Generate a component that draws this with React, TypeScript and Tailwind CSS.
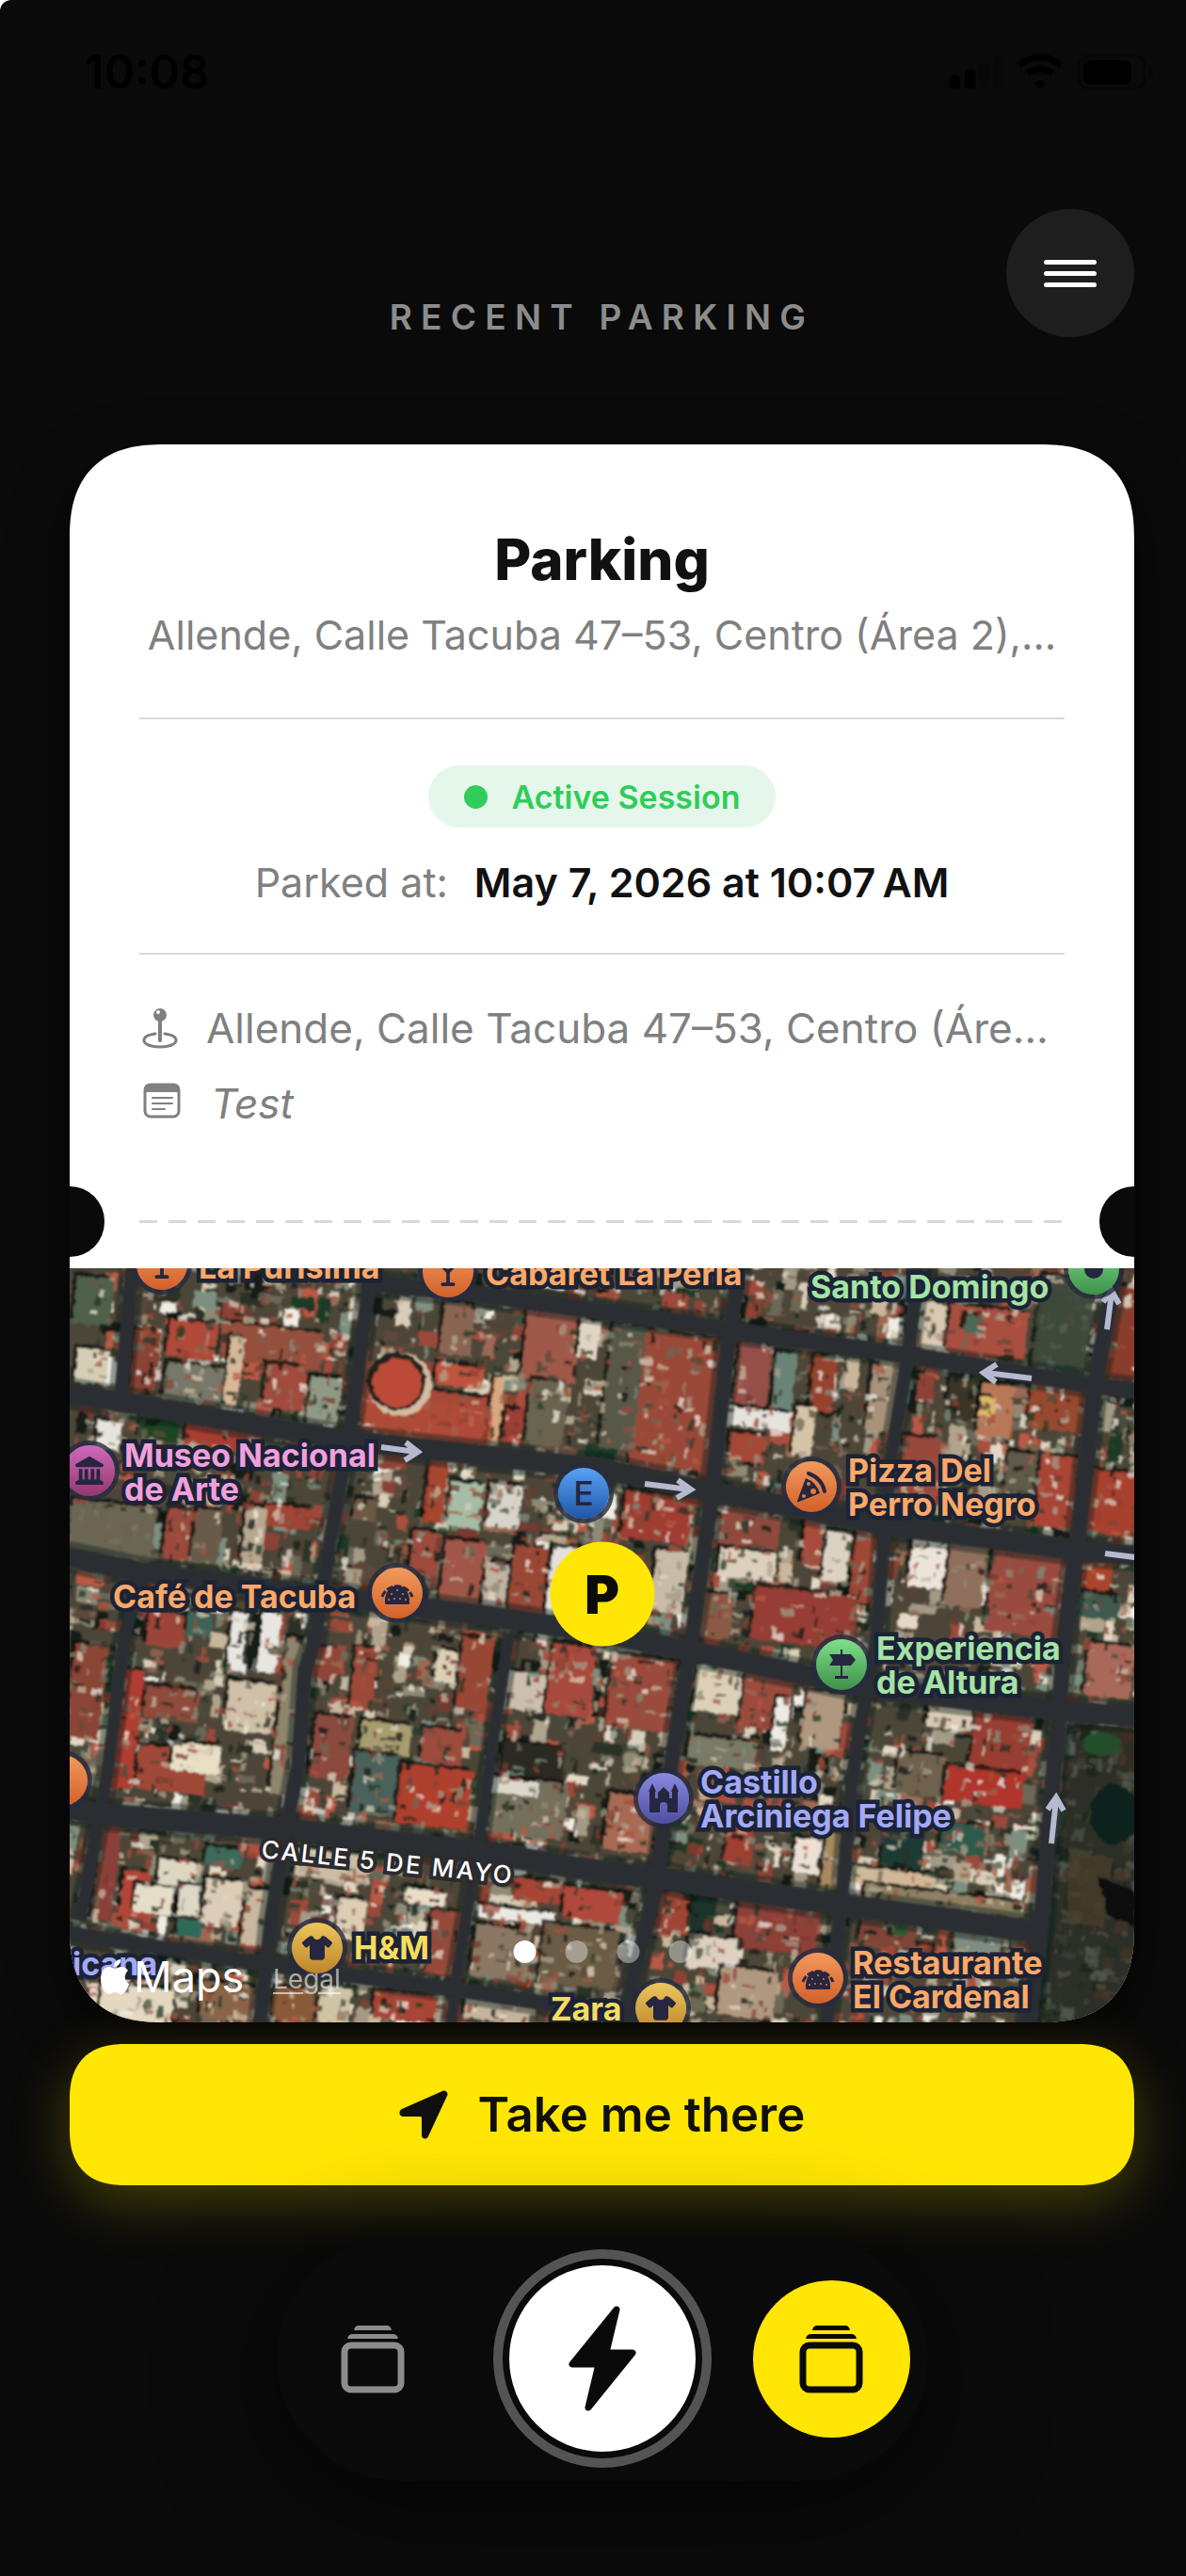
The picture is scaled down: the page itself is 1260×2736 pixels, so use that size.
import React from 'react';
import { FaLandmark, FaMartiniGlassEmpty, FaShirt } from 'react-icons/fa6';

type Tone = 'orange' | 'green' | 'pink' | 'indigo' | 'gold' | 'blue';

interface Place {
  name?: string[];
  tone: Tone;
  icon?: React.ReactNode;
  pin?: { x: number; y: number };
  label?: { x: number; y: number };
}

const TEXT_TONES: Record<Tone, string> = {
  orange: 'text-[#fba868]',
  green: 'text-[#a4e3a4]',
  pink: 'text-[#f0a0dd]',
  indigo: 'text-[#a3a9f5]',
  gold: 'text-[#f5dc60]',
  blue: 'text-[#4a90e8]',
};

const PIN_TONES: Record<Tone, string> = {
  orange: 'from-[#f29a5c] to-[#d2602a]',
  green: 'from-[#7fe08c] to-[#3d9148]',
  pink: 'from-[#d069bd] to-[#94396f]',
  indigo: 'from-[#8a8be0] to-[#4e4ea0]',
  gold: 'from-[#ecc65c] to-[#bd852a]',
  blue: 'from-[#5aa2f5] to-[#1f56a8]',
};

// Building footprints: x, y, width, height, roof colour
type Roof = [number, number, number, number, string];

const ROOFS: Roof[] = [
  [105, 57, 51, 39, '#b04a38'], [66, 66, 28, 67, '#8a4234'], [160, 63, 109, 40, '#95503c'],
  [167, 73, 15, 73, '#d8b898'], [101, 103, 62, 40, '#77786a'], [207, 103, 43, 47, '#a04c3c'],
  [254, 116, 33, 50, '#8f9a85'], [7, 86, 33, 37, '#d5cdb5'], [5, 10, 40, 50, '#50604c'],
  [309, 130, 141, 50, '#a84a38'], [389, 103, 51, 23, '#c0523c'], [396, 36, 33, 57, '#8a6552'],
  [483, 46, 58, 74, '#a0584a'], [487, 120, 40, 70, '#6a6450'], [541, 56, 22, 40, '#e0d5c5'],
  [447, 116, 12, 74, '#d9a880'], [461, 150, 20, 36, '#a03c34'], [29, 163, 25, 30, '#e8e4dc'],
  [74, 160, 42, 23, '#1f4424'], [123, 168, 80, 24, '#a83c30'], [403, 228, 35, 48, '#a5bda6'],
  [445, 230, 35, 46, '#d8d4cc'], [0, 250, 90, 58, '#6b6654'], [101, 256, 29, 54, '#9a4a3c'],
  [132, 256, 28, 57, '#6a5a48'], [207, 253, 51, 23, '#a04434'], [185, 253, 22, 60, '#b8a890'],
  [363, 280, 29, 46, '#9c4c3c'], [396, 290, 44, 70, '#a0564a'], [440, 313, 29, 50, '#c0b4a4'],
  [469, 296, 36, 74, '#9a4636'], [509, 296, 26, 74, '#e4e0da'], [83, 366, 40, 37, '#9a4438'],
  [125, 366, 27, 24, '#3c6458'], [170, 366, 20, 64, '#e8e6e0'], [202, 366, 20, 64, '#e8e6e0'],
  [190, 366, 12, 60, '#161a18'], [380, 190, 20, 80, '#a8442f'], [302, 245, 24, 24, '#6a5a44'],
  [602, 70, 88, 150, '#9a4a38'], [570, 60, 36, 133, '#59584a'], [708, 80, 36, 66, '#94504a'],
  [748, 90, 22, 63, '#6a8478'], [788, 93, 25, 60, '#96422e'], [697, 150, 69, 20, '#e6e2dc'],
  [700, 176, 40, 30, '#a44a38'], [770, 146, 21, 54, '#d6c4a8'], [850, 96, 32, 77, '#a8927a'],
  [900, 36, 30, 50, '#d8c8b0'], [933, 43, 84, 50, '#a85040'], [951, 50, 18, 20, '#4d6a58'],
  [1028, 10, 58, 106, '#3f4a3c'], [1104, 20, 34, 100, '#8a3c2c'], [933, 116, 29, 44, '#3a3426'],
  [966, 123, 36, 57, '#b87858'], [967, 137, 16, 20, '#dcb868'], [1020, 123, 62, 50, '#96482f'],
  [882, 180, 44, 60, '#98483a'], [995, 196, 33, 40, '#5f5a48'], [1028, 200, 47, 76, '#a84436'],
  [1082, 216, 50, 67, '#a8402f'], [588, 240, 72, 50, '#a03c30'], [686, 250, 69, 46, '#8e4c3e'],
  [780, 260, 20, 56, '#a84c3c'], [802, 280, 26, 53, '#dcd2c4'], [832, 275, 22, 80, '#a04636'],
  [893, 283, 37, 57, '#ece4da'], [933, 286, 40, 74, '#90705c'], [977, 300, 80, 90, '#9a4c40'],
  [1075, 306, 33, 37, '#a8442c'], [1072, 346, 44, 27, '#3f5a50'], [668, 346, 36, 47, '#8a5a44'],
  [726, 343, 109, 57, '#963e34'], [690, 300, 60, 30, '#dcd0bc'], [620, 300, 34, 66, '#c8bca8'],
  [47, 426, 26, 127, '#b03c30'], [80, 446, 58, 34, '#8f4c3a'], [167, 440, 51, 53, '#cfc0a8'],
  [72, 510, 73, 46, '#a04838'], [109, 505, 51, 31, '#e8dfc4'], [0, 400, 36, 100, '#8a4434'],
  [222, 393, 22, 167, '#8f846c'], [258, 403, 28, 34, '#904438'], [301, 403, 24, 67, '#9c4a38'],
  [389, 406, 23, 34, '#ddd0b4'], [414, 393, 33, 77, '#984636'], [309, 483, 54, 33, '#a89c70'],
  [301, 516, 48, 64, '#4c625c'], [349, 530, 76, 63, '#b0402e'], [374, 490, 44, 36, '#9c4c3e'],
  [258, 476, 40, 67, '#8c4a3e'], [458, 506, 67, 34, '#2a2c22'], [509, 400, 47, 76, '#a84a3e'],
  [462, 430, 42, 40, '#cbbfae'], [447, 543, 80, 60, '#74705c'], [448, 543, 50, 16, '#dcd8cc'],
  [29, 590, 21, 103, '#8a4038'], [55, 640, 29, 50, '#b04438'], [69, 656, 40, 30, '#e4dec8'],
  [94, 630, 44, 26, '#ddd6c0'], [145, 616, 38, 20, '#3c6a5c'], [115, 655, 24, 44, '#ded8c6'],
  [142, 650, 40, 48, '#dccdb8'], [185, 660, 28, 60, '#c8b8a0'], [114, 692, 26, 18, '#2f6a5a'],
  [240, 620, 80, 30, '#cbbca4'], [356, 660, 44, 16, '#eadcc8'], [381, 683, 33, 70, '#94483a'],
  [284, 670, 30, 44, '#dccdb4'], [425, 680, 91, 14, '#ece8e2'], [472, 650, 50, 24, '#a84434'],
  [525, 660, 60, 33, '#b0483a'], [501, 700, 80, 62, '#6a5c44'], [428, 700, 60, 55, '#8a7864'],
  [32, 763, 77, 37, '#e4d8c0'], [140, 760, 60, 40, '#8a6448'], [215, 765, 44, 35, '#8a5a38'],
  [265, 763, 33, 40, '#cfc4a4'], [323, 770, 66, 30, '#a84434'], [420, 770, 60, 30, '#c4b49c'],
  [573, 413, 69, 77, '#9a4c3c'], [664, 423, 51, 50, '#ddd0b8'], [715, 430, 51, 60, '#9c4c3e'],
  [657, 500, 73, 30, '#7a7a66'], [748, 456, 14, 57, '#ecece6'], [780, 450, 40, 60, '#b09880'],
  [911, 460, 55, 30, '#dccbb4'], [959, 473, 61, 67, '#983e32'], [879, 516, 51, 44, '#6e6250'],
  [930, 533, 83, 37, '#b0342c'], [926, 590, 47, 33, '#2f5a4c'], [864, 593, 44, 47, '#1e3a34'],
  [830, 640, 90, 18, '#d0b898'], [845, 664, 170, 16, '#8e8062'], [697, 596, 29, 37, '#9c4030'],
  [770, 606, 29, 37, '#ece0d4'], [801, 600, 22, 60, '#a88860'], [570, 560, 50, 60, '#a86a54'],
  [624, 663, 33, 40, '#a04434'], [660, 666, 26, 40, '#1c302c'], [708, 673, 87, 53, '#8c3f38'],
  [657, 710, 54, 36, '#ddd0c0'], [840, 690, 60, 30, '#7c4438'], [870, 692, 20, 16, '#2c5a30'],
  [940, 700, 50, 30, '#7f8c80'], [690, 745, 60, 50, '#b09880'], [1080, 400, 50, 56, '#a8685a'],
];

const ROADS = [
  // west to east
  { d: 'M310 15 L425 26 L566 46 L704 66 L893 93 L1093 125 L1140 131', w: 18 },
  { d: 'M-6 132 L61 143 L294 183 L566 213 L675 236 L868 273 L1075 300 L1140 306', w: 22 },
  { d: 'M-6 306 L76 323 L287 350 L450 370 L566 388 L657 406 L849 446 L1053 470 L1140 477', w: 22 },
  { d: 'M-6 572 L32 580 L229 596 L432 620 L566 641 L628 648 L820 676 L1035 706', w: 24 },
  { d: 'M-6 706 L214 740 L410 766 L566 790 L640 803', w: 16 },
  // north to south
  { d: 'M67 -5 L54 140', w: 14 },
  { d: 'M76 326 L58 393 L40 536 L32 580 L11 693', w: 13 },
  { d: 'M321 -5 L298 173 L276 293 L261 393 L250 426 L243 526 L229 600 L214 693 L202 805', w: 15 },
  { d: 'M467 388 L450 500 L436 600 L410 760 L405 805', w: 12 },
  { d: 'M712 -5 L700 76 L682 240 L661 393 L639 526 L624 653 L606 726 L586 805', w: 16 },
  { d: 'M903 -5 L889 103 L871 210 L857 393 L846 450 L831 543 L820 676 L804 805', w: 14 },
  { d: 'M1112 -5 L1089 126 L1071 286 L1057 393 L1049 493 L1038 626 L1031 706 L1018 805', w: 17 },
];

const ARROWS = [
  'M331 190 L368 195 M357 185 L370 195 L356 204',
  'M611 229 L658 235 M646 225 L660 235 L645 244',
  'M1022 117 L973 111 M985 102 L971 111 L984 121',
  'M1102 65 L1107 26 M1098 36 L1107 24 L1115 38',
  'M1100 303 L1140 308',
  'M1043 611 L1048 564 M1039 575 L1048 562 L1056 576',
];

const DETAIL_COLOURS = [
  '#a8503e', '#8c4234', '#b85a44', '#743a2e', '#9a6a54', '#e4d8c4', '#c9b79c', '#f0ece2',
  '#2a3026', '#161c18', '#4a4c3c', '#6c6856', '#8f8a74', '#1f3a26', '#5c4a3a', '#7d8f80',
  '#b0a48c', '#141a16', '#d8cdb8', '#a39a86', '#9c4a3a',
];

function seeded(seed: number) {
  let s = seed;
  return () => {
    s = (s * 1664525 + 1013904223) % 4294967296;
    return s / 4294967296;
  };
}

function makeDetails(count: number, seed: number, min: number, max: number) {
  const rand = seeded(seed);
  return Array.from({ length: count }, () => {
    const x = rand() * 1200 - 20;
    const y = rand() * 1000 - 150;
    const tall = rand() > 0.5;
    const a = min + rand() * (max - min);
    const b = min + rand() * (max - min) * 0.4;
    const fill = DETAIL_COLOURS[Math.floor(rand() * DETAIL_COLOURS.length)];
    return { x, y, w: tall ? b : a, h: tall ? a : b, fill };
  });
}

const BASE_DETAILS = makeDetails(2600, 11, 8, 34);
const FINE_DETAILS = makeDetails(7500, 77, 2, 14);

function SatelliteImage() {
  return (
    <svg viewBox="0 0 1131 801" preserveAspectRatio="xMidYMid slice" className="block h-full w-full" aria-hidden="true">
      <defs>
        <filter id="rough" x="0" y="0" width="100%" height="100%">
          <feTurbulence type="fractalNoise" baseFrequency="0.12" numOctaves="2" seed="4" result="noise" />
          <feDisplacementMap in="SourceGraphic" in2="noise" scale="6" xChannelSelector="R" yChannelSelector="G" />
          <feGaussianBlur stdDeviation="0.9" />
        </filter>
        <filter id="soften" x="0" y="0" width="100%" height="100%">
          <feGaussianBlur stdDeviation="1" />
        </filter>
      </defs>
      <rect width="1131" height="801" fill="#4c4638" />
      <g filter="url(#rough)">
        <g transform="rotate(7 565 400)">
          {BASE_DETAILS.map((r, i) => (
            <rect key={i} x={r.x} y={r.y} width={r.w} height={r.h} fill={r.fill} />
          ))}
        </g>
        {ROOFS.map(([x, y, w, h, fill], i) => (
          <g key={i} transform={`rotate(7 ${x + w / 2} ${y + h / 2})`}>
            <rect x={x - 4} y={y - 4} width={w} height={h} fill="#0e120c" opacity="0.8" />
            <rect x={x} y={y} width={w} height={h} fill={fill} />
          </g>
        ))}
        <g transform="rotate(7 565 400)" opacity="0.75">
          {FINE_DETAILS.map((r, i) => (
            <rect key={i} x={r.x} y={r.y} width={r.w} height={r.h} fill={r.fill} />
          ))}
        </g>
        <path d="M308 90 L301 150 L330 178 L400 188 L446 190 L450 150 L380 140 Z" fill="#b04c38" opacity="0.7" />
        <circle cx="351" cy="123" r="34" fill="#d6bca2" />
        <circle cx="347" cy="120" r="31" fill="#20201a" />
        <circle cx="348" cy="122" r="26" fill="#bb4c38" />
        <path d="M1030 20 L1088 30 L1078 114 L1022 104 Z" fill="#3c473a" opacity="0.8" />
        <path d="M0 252 L92 262 L84 310 L0 298 Z" fill="#6b6654" opacity="0.85" />
        <path d="M1060 484 L1140 490 V805 H1025 L1036 706 Z" fill="#1f2a21" opacity="0.75" />
        <ellipse cx="1096" cy="505" rx="20" ry="12" fill="#24502a" />
        <ellipse cx="1110" cy="580" rx="26" ry="32" fill="#10241a" />
        <path d="M1062 620 L1108 626 L1098 700 L1060 694 Z" fill="#4a3d2a" opacity="0.8" />
        <path d="M1092 645 L1131 662 V700 L1104 688 Z" fill="#090b0a" />
      </g>
      <g filter="url(#soften)">
        {ROADS.map((road) => (
          <path key={road.d} d={road.d} fill="none" stroke="#101c12" strokeWidth={road.w + 12} strokeOpacity="0.4" />
        ))}
        {ROADS.map((road) => (
          <path key={road.d} d={road.d} fill="none" stroke="#2a2d30" strokeWidth={road.w} strokeLinejoin="round" />
        ))}
      </g>
      {ARROWS.map((d) => (
        <path key={d} d={d} fill="none" stroke="#b5bad0" strokeWidth="6" />
      ))}
    </svg>
  );
}

function TacoIcon() {
  return (
    <svg viewBox="0 0 36 26" className="h-[26px] w-[36px]" aria-hidden="true">
      <path d="M5 24 C4 12 11 5 18 5 C25 5 32 12 31 24 Q31 25 30 25 H6 Q5 25 5 24 Z" fill="currentColor" />
      <path d="M2 17 A17 17 0 0 1 34 17" fill="none" stroke="currentColor" strokeWidth="3" strokeDasharray="7 2" />
      <g fill="#e07a3c">
        <circle cx="12" cy="14" r="1" /><circle cx="18" cy="10" r="1" /><circle cx="24" cy="14" r="1" />
        <circle cx="9" cy="20" r="1" /><circle cx="15" cy="19" r="1" /><circle cx="21" cy="19" r="1" /><circle cx="27" cy="20" r="1" />
      </g>
    </svg>
  );
}

function PizzaIcon() {
  return (
    <svg viewBox="0 0 34 34" className="h-[34px] w-[34px]" aria-hidden="true">
      <path d="M2 32 L11 8 Q22 12 26 24 L4 33 Q2 34 2 32 Z" fill="currentColor" />
      <path d="M14 3 Q28 8 31 22" fill="none" stroke="currentColor" strokeWidth="4" strokeLinecap="round" />
      <circle cx="19" cy="22" r="3" fill="#e07a3c" />
      <circle cx="14" cy="14" r="2" fill="#e07a3c" />
      <circle cx="9" cy="27" r="2" fill="#e07a3c" />
    </svg>
  );
}

function SignpostIcon() {
  return (
    <svg viewBox="0 0 32 34" className="h-[34px] w-[32px]" fill="currentColor" aria-hidden="true">
      <path d="M15 1 h2 v5 h9 l5 6 l-5 6 h-9 v11 h6 v3 H9 v-3 h6 V18 H3 l4 -6 l-4 -6 h12 Z" />
    </svg>
  );
}

function CastleIcon() {
  return (
    <svg viewBox="0 0 36 32" className="h-[32px] w-[36px]" fill="currentColor" aria-hidden="true">
      <path d="M6 0 L10 9 H9 V16 H12 V10 L18 4 L24 10 V16 H27 V9 H26 L30 0 L34 9 H33 V31 H22 V24 A4 4 0 0 0 14 24 V31 H3 V9 H2 Z" />
    </svg>
  );
}

const PLACES: Place[] = [
  { name: ['La Purísima'], tone: 'orange', icon: <FaMartiniGlassEmpty size={30} />, pin: { x: 98, y: -4 }, label: { x: 137, y: -19 } },
  { name: ['Cabaret La Perla'], tone: 'orange', icon: <FaMartiniGlassEmpty size={30} />, pin: { x: 402, y: 4 }, label: { x: 442, y: -12 } },
  { name: ['Santo Domingo'], tone: 'green', icon: <span className="size-5 rounded-full bg-current" />, pin: { x: 1088, y: 1 }, label: { x: 787, y: 2 } },
  { name: ['Museo Nacional', 'de Arte'], tone: 'pink', icon: <FaLandmark size={30} />, pin: { x: 21, y: 215 }, label: { x: 58, y: 181 } },
  { tone: 'blue', icon: <span className="text-[36px] font-medium">E</span>, pin: { x: 546, y: 239 } },
  { name: ['Pizza Del', 'Perro Negro'], tone: 'orange', icon: <PizzaIcon />, pin: { x: 788, y: 232 }, label: { x: 827, y: 197 } },
  { name: ['Café de Tacuba'], tone: 'orange', icon: <TacoIcon />, pin: { x: 348, y: 345 }, label: { x: 46, y: 331 } },
  { name: ['Experiencia', 'de Altura'], tone: 'green', icon: <SignpostIcon />, pin: { x: 820, y: 421 }, label: { x: 857, y: 386 } },
  { name: ['Castillo', 'Arciniega Felipe'], tone: 'indigo', icon: <CastleIcon />, pin: { x: 631, y: 563 }, label: { x: 670, y: 528 } },
  { name: ['H&M'], tone: 'gold', icon: <FaShirt size={32} />, pin: { x: 263, y: 722 }, label: { x: 302, y: 704 } },
  { name: ['Zara'], tone: 'gold', icon: <FaShirt size={32} />, pin: { x: 628, y: 786 }, label: { x: 511, y: 769 } },
  { name: ['Restaurante', 'El Cardenal'], tone: 'orange', icon: <TacoIcon />, pin: { x: 795, y: 754 }, label: { x: 832, y: 720 } },
  { tone: 'orange', pin: { x: -8, y: 544 } },
  { name: ['icana'], tone: 'indigo', label: { x: 3, y: 721 } },
];

function MapPlace({ name, tone, icon, pin, label }: Place) {
  return (
    <>
      {pin && (
        <span
          className={`absolute flex size-[54px] -translate-1/2 items-center justify-center rounded-full bg-linear-to-b text-[#262640] ring-[5px] ring-[#262a40]/80 ${PIN_TONES[tone]}`}
          style={{ left: pin.x, top: pin.y }}
        >
          {icon}
        </span>
      )}
      {name && label && (
        <span
          className={`absolute text-[34px] leading-[36px] font-bold whitespace-nowrap [paint-order:stroke_fill] [-webkit-text-stroke:9px_#1c2336] ${TEXT_TONES[tone]}`}
          style={{ left: label.x, top: label.y }}
        >
          {name.map((line) => (
            <span key={line} className="block">{line}</span>
          ))}
        </span>
      )}
    </>
  );
}

function StackIcon() {
  return (
    <svg viewBox="0 0 68 73" className="h-[73px] w-[68px]" aria-hidden="true">
      <path d="M14 6 Q15 1 19 1 H49 Q53 1 54 6 Z M7 15 Q8 10 13 10 H55 Q60 10 61 15 Z" fill="currentColor" />
      <rect x="4" y="22" width="60" height="47" rx="7" fill="none" stroke="currentColor" strokeWidth="7" />
    </svg>
  );
}

function StatusBar() {
  return (
    <div className="flex h-[154px] items-center justify-between pr-[35px] pl-[90px] text-black">
      <span className="text-[49px] leading-[60px] font-semibold">10:08</span>
      <svg viewBox="0 0 218 40" className="h-[40px] w-[218px]" fill="currentColor" aria-hidden="true">
        <rect x="2" y="23" width="11" height="14" rx="4" />
        <rect x="18" y="17" width="11" height="20" rx="4" />
        <rect x="33" y="9" width="11" height="28" rx="4" opacity="0.15" />
        <rect x="48" y="2" width="11" height="35" rx="4" opacity="0.15" />
        <path d="M76 12 A34 34 0 0 1 120 12" fill="none" stroke="currentColor" strokeWidth="7" />
        <path d="M85 21 A21 21 0 0 1 111 21" fill="none" stroke="currentColor" strokeWidth="7" />
        <path d="M91 31 A11 11 0 0 1 105 31 L98 38 Z" />
        <rect x="139" y="2" width="70" height="35" rx="12" fill="none" stroke="currentColor" strokeWidth="3" opacity="0.35" />
        <rect x="144" y="7" width="51" height="26" rx="8" />
        <path d="M214 14 Q218 16 218 20 Q218 24 214 26 Z" opacity="0.5" />
      </svg>
    </div>
  );
}

function ParkingMap() {
  return (
    <section aria-label="Map" className="relative h-[801px] overflow-hidden">
      <SatelliteImage />
      {PLACES.map((place, i) => (
        <MapPlace key={i} {...place} />
      ))}
      <span className="absolute top-[602px] left-[204px] origin-left rotate-6 text-[26px] leading-[30px] font-medium tracking-widest whitespace-nowrap text-white [paint-order:stroke_fill] [-webkit-text-stroke:8px_#2b2b2e]">
        CALLE 5 DE MAYO
      </span>
      <div className="absolute top-[346px] left-1/2 flex size-[111px] -translate-1/2 items-center justify-center rounded-full bg-[#ffe604] text-[56px] font-black text-[#0b0b0b]">
        P
      </div>
      <div className="absolute top-[728px] left-[32px] flex items-center text-white">
        <svg viewBox="0 0 32 40" className="h-[40px] w-[32px]" fill="currentColor" aria-hidden="true">
          <path d="M22 1 C23 5 19 9 15 9 C15 5 18 1 22 1 Z" />
          <path d="M16 11 C18 11 20 9 23 9 C26 9 29 11 30 13 C25 17 26 24 31 27 C30 32 26 38 23 38 C20 38 19 36 16 36 C13 36 12 38 10 38 C5 38 1 29 1 22 C1 14 5 9 10 9 C13 9 14 11 16 11 Z" />
        </svg>
        <span className="ml-1 text-[45px] leading-[50px]">Maps</span>
      </div>
      <a href="#legal" className="absolute top-[737px] left-[216px] text-[28px] leading-[36px] text-white/60 underline underline-offset-4">
        Legal
      </a>
      <div className="absolute top-[714px] left-1/2 flex -translate-x-1/2 gap-[31px]">
        <span className="size-6 rounded-full bg-white" />
        <span className="size-6 rounded-full bg-white/40" />
        <span className="size-6 rounded-full bg-white/40" />
        <span className="size-6 rounded-full bg-white/40" />
      </div>
    </section>
  );
}

function ParkingCard() {
  return (
    <article className="overflow-hidden rounded-[100px] bg-white shadow-[0_20px_60px_rgba(0,0,0,0.5)] [corner-shape:superellipse(1.3)]">
      <div className="px-[74px] pt-[86px]">
        <h2 className="text-center text-[60px] leading-[72px] font-extrabold text-[#111111]">Parking</h2>
        <p className="mt-4 text-center text-[43px] leading-[56px] whitespace-nowrap text-[#808080]">
          Allende, Calle Tacuba 47–53, Centro (Área 2),…
        </p>
        <hr className="mt-[60px] border-t-2 border-[#d9d9d9]" />

        <div className="mt-[49px] flex justify-center">
          <span className="flex h-[66px] items-center gap-[26px] rounded-full bg-[#e5f7ea] px-[38px] text-[34px] font-semibold text-[#30cd5b]">
            <span className="size-[25px] rounded-full bg-current" />
            Active Session
          </span>
        </div>
        <p className="mt-[30px] flex justify-center gap-7 text-[43px] leading-[56px] whitespace-nowrap">
          <span className="text-[#808080]">Parked at:</span>
          <time dateTime="2026-05-07T10:07" className="font-semibold text-[#111111]">May 7, 2026 at 10:07{'\u202f'}AM</time>
        </p>
        <hr className="mt-[47px] border-t-2 border-[#d9d9d9]" />

        <div className="mt-[50px] flex items-center text-[#808080]">
          <svg viewBox="0 0 46 46" className="mr-[25px] h-[46px] w-[46px] shrink-0" aria-hidden="true">
            <path d="M17 29 C9 30 5 32 5 36 C5 40 12 43 22 43 C32 43 39 40 39 36 C39 32 35 30 27 29" fill="none" stroke="currentColor" strokeWidth="3" strokeLinecap="round" />
            <path d="M22 14 V36" stroke="currentColor" strokeWidth="4" strokeLinecap="round" />
            <circle cx="22" cy="9" r="7" fill="currentColor" />
            <circle cx="20" cy="6" r="2" fill="white" />
          </svg>
          <span className="text-[44px] leading-[56px] whitespace-nowrap">Allende, Calle Tacuba 47–53, Centro (Áre…</span>
        </div>
        <div className="mt-6 flex items-center text-[#808080]">
          <svg viewBox="0 0 46 46" className="mr-[30px] h-[46px] w-[46px] shrink-0" aria-hidden="true">
            <rect x="6" y="3" width="36" height="34" rx="6" fill="none" stroke="currentColor" strokeWidth="3" />
            <path d="M5 11 V8 Q5 2 11 2 H37 Q43 2 43 8 V11 Z" fill="currentColor" />
            <path d="M14 17 H35 M14 23 H35 M14 29 H27" stroke="currentColor" strokeWidth="2" strokeLinecap="round" />
          </svg>
          <span className="text-[44px] leading-[56px] italic">Test</span>
        </div>
      </div>

      <div className="mt-[60px] mb-3 flex h-[75px] items-center justify-between">
        <span className="h-[75px] w-[37px] rounded-r-full bg-[#0a0a0a]" />
        <span className="mx-[37px] h-[3px] grow bg-[repeating-linear-gradient(90deg,#d9d9d9_0_19px,transparent_19px_31px)]" />
        <span className="h-[75px] w-[37px] rounded-l-full bg-[#0a0a0a]" />
      </div>
      <ParkingMap />
    </article>
  );
}

function BottomNav() {
  return (
    <nav className="relative mx-auto mt-[54px] flex w-fit items-center gap-[44px] rounded-full bg-[#0a0a0a] px-[19px] py-[14px] shadow-[0_20px_120px_rgba(0,0,0,0.5)]">
      <button type="button" aria-label="Saved parkings" className="flex size-[167px] items-center justify-center rounded-full text-[#8c8c8c]">
        <StackIcon />
      </button>
      <button type="button" aria-label="Quick park" className="flex size-[232px] items-center justify-center rounded-full border-[10px] border-[#545454]">
        <span className="flex size-[198px] items-center justify-center rounded-full bg-white">
          <svg viewBox="0 0 72 112" className="h-[112px] w-[72px]" aria-hidden="true">
            <path d="M51 4 L4 62 H32 L21 108 L68 50 H40 Z" fill="#0a0a0a" stroke="#0a0a0a" strokeWidth="7" strokeLinejoin="round" />
          </svg>
        </span>
      </button>
      <button type="button" aria-label="Recent parkings" className="flex size-[167px] items-center justify-center rounded-full bg-[#ffe604] text-[#0a0a0a]">
        <StackIcon />
      </button>
    </nav>
  );
}

export default function App() {
  return (
    <div className="min-h-screen bg-white">
      <div className="min-h-screen overflow-hidden rounded-tl-[12px] bg-[#0a0a0a] font-['Inter',sans-serif]">
        <StatusBar />
        <main className="pt-[68px] pr-[55px] pb-[100px] pl-[74px]">
          <header className="grid">
            <h1 className="col-start-1 row-start-1 self-end text-center text-[37px] leading-[42px] font-semibold tracking-[0.25em] text-[#8c8c8c]">
              RECENT PARKING
            </h1>
            <button type="button" aria-label="Menu" className="col-start-1 row-start-1 flex size-[136px] flex-col items-center justify-center gap-[7px] justify-self-end rounded-full bg-[#1e1e1e]">
              <span className="h-[5px] w-14 rounded-full bg-white" />
              <span className="h-[5px] w-14 rounded-full bg-white" />
              <span className="h-[5px] w-14 rounded-full bg-white" />
            </button>
          </header>

          <div className="mt-[114px]">
            <ParkingCard />
          </div>

          <button type="button" className="mt-[23px] flex h-[150px] w-full items-center justify-center gap-[32px] rounded-[60px] bg-[#ffe604] text-[51px] leading-[60px] font-semibold text-[#0f0f0f] shadow-[0_16px_60px_rgba(255,230,4,0.25)] [corner-shape:superellipse(1.3)]">
            <svg viewBox="0 0 52 52" className="h-[52px] w-[52px]" fill="currentColor" aria-hidden="true">
              <path d="M46 1 C49 -1 53 3 51 6 L31 49 C29 53 24 52 24 48 V29 Q24 28 22 28 H4 C0 28 -1 22 3 20 Z" />
            </svg>
            Take me there
          </button>

          <BottomNav />
        </main>
      </div>
    </div>
  );
}
